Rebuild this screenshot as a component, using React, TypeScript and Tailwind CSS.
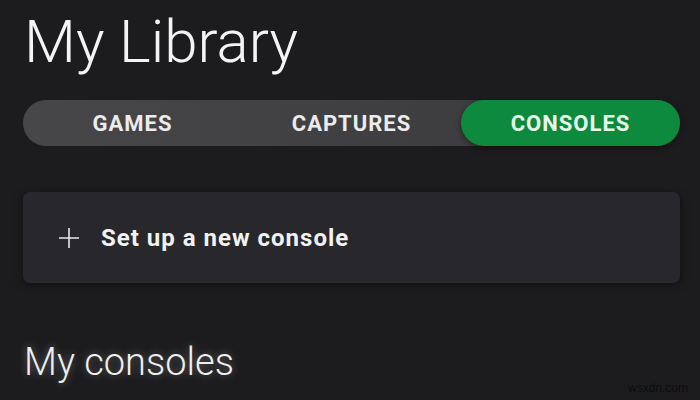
import React from "react";

export default function App() {
  const font = { fontFamily: "Roboto, 'Noto Sans', sans-serif" };
  return (
    <div
      className="w-[700px] h-[400px] bg-[#1c1c1e] overflow-hidden relative text-white"
      style={font}
    >
      <div className="pl-[23px] pr-[20px] pt-[8px] flex flex-col">
        <h1 className="text-[60px] leading-[68px] font-light text-[#f4f4f4] pl-[1px]">
          My Library
        </h1>
        <div className="mt-[24px] h-[46px] rounded-full bg-gradient-to-r from-[#474749] to-[#39393b] grid grid-cols-3 items-stretch">
          <div className="flex items-center justify-center text-[22px] font-bold text-[#ececec] tracking-[1px]">
            GAMES
          </div>
          <div className="flex items-center justify-center text-[22px] font-bold text-[#ececec] tracking-[1px]">
            CAPTURES
          </div>
          <div className="flex items-center justify-center rounded-full bg-[#0e8a3f] text-[22px] font-bold text-[#e8fbe9] tracking-[1px] shadow-[0_2px_6px_rgba(0,0,0,0.4)]">
            CONSOLES
          </div>
        </div>
        <div className="mt-[46px] h-[91px] rounded-[7px] bg-[#28282c] shadow-[0_2px_10px_rgba(0,0,0,0.45)] flex items-center pl-[35px] gap-[21px]">
          <svg width="22" height="22" viewBox="0 0 22 22" className="shrink-0">
            <path d="M11 1V21M1 11H21" stroke="#e8e8e8" strokeWidth="1.6" />
          </svg>
          <span className="text-[24px] font-bold text-[#f2f2f2] tracking-[1px]">
            Set up a new console
          </span>
        </div>
        <h2
          className="mt-[58px] text-[38px] leading-[42px] font-light text-[#eeeeee] pl-[1px]"
          style={{ textShadow: "0 0 8px rgba(255,255,255,0.35)" }}
        >
          My consoles
        </h2>
      </div>
      <div
        className="absolute right-[12px] bottom-[3px] text-[12px] text-[#0c0c0c]"
        style={{ fontFamily: "'Liberation Sans', Arial, sans-serif" }}
      >
        wsxdn.com
      </div>
    </div>
  );
}
